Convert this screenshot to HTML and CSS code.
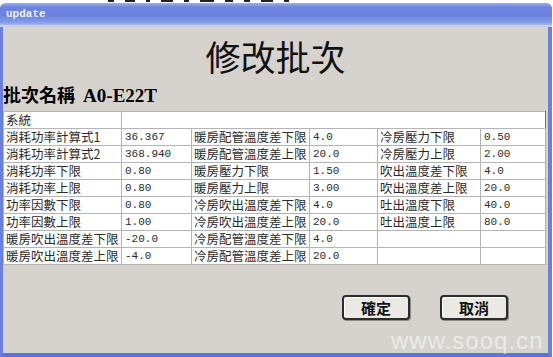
FILE: index.html
```html
<!DOCTYPE html>
<html>

<head>
    <meta charset="UTF-8">
    <title>update</title>
    <link rel="stylesheet" href="styles.css">
</head>

<body>
    <div class="top-strip">
        <i class="ink" style="width: 6px"></i>
        <i class="ink" style="width: 10px"></i>
        <i class="ink" style="width: 4px"></i>
        <i class="ink" style="width: 12px"></i>
        <i class="ink" style="width: 5px"></i>
        <i class="ink" style="width: 14px"></i>
        <i class="ink" style="width: 8px"></i>
        <i class="ink" style="width: 6px"></i>
        <i class="ink" style="width: 12px"></i>
        <i class="ink" style="width: 5px"></i>
    </div>
    <div class="window">
        <div class="titlebar">update</div>
        <div class="content">
            <h1 class="heading">修改批次</h1>
            <div class="batch-name">批次名稱 <span class="code">A0-E22T</span></div>
            <table class="grid">
                <colgroup>
                    <col style="width: 118px">
                    <col style="width: 70px">
                    <col style="width: 118px">
                    <col style="width: 68px">
                    <col style="width: 103px">
                    <col style="width: 65px">
                </colgroup>
                <tr>
                    <td>系統</td>
                    <td colspan="5" class="blank"></td>
                </tr>
                <tr>
                    <td>消耗功率計算式1</td><td class="num">36.367</td>
                    <td>暖房配管溫度差下限</td><td class="num">4.0</td>
                    <td>冷房壓力下限</td><td class="num">0.50</td>
                </tr>
                <tr>
                    <td>消耗功率計算式2</td><td class="num">368.940</td>
                    <td>暖房配管溫度差上限</td><td class="num">20.0</td>
                    <td>冷房壓力上限</td><td class="num">2.00</td>
                </tr>
                <tr>
                    <td>消耗功率下限</td><td class="num">0.80</td>
                    <td>暖房壓力下限</td><td class="num">1.50</td>
                    <td>吹出溫度差下限</td><td class="num">4.0</td>
                </tr>
                <tr>
                    <td>消耗功率上限</td><td class="num">0.80</td>
                    <td>暖房壓力上限</td><td class="num">3.00</td>
                    <td>吹出溫度差上限</td><td class="num">20.0</td>
                </tr>
                <tr>
                    <td>功率因數下限</td><td class="num">0.80</td>
                    <td>冷房吹出溫度差下限</td><td class="num">4.0</td>
                    <td>吐出溫度下限</td><td class="num">40.0</td>
                </tr>
                <tr>
                    <td>功率因數上限</td><td class="num">1.00</td>
                    <td>冷房吹出溫度差上限</td><td class="num">20.0</td>
                    <td>吐出溫度上限</td><td class="num">80.0</td>
                </tr>
                <tr>
                    <td>暖房吹出溫度差下限</td><td class="num">-20.0</td>
                    <td>冷房配管溫度差下限</td><td class="num">4.0</td>
                    <td></td><td></td>
                </tr>
                <tr>
                    <td>暖房吹出溫度差上限</td><td class="num">-4.0</td>
                    <td>冷房配管溫度差上限</td><td class="num">20.0</td>
                    <td></td><td></td>
                </tr>
            </table>
            <div class="actions">
                <button class="btn">確定</button>
                <button class="btn">取消</button>
            </div>
            <div class="watermark">www.sooq.cn</div>
        </div>
    </div>
</body>

</html>
```

FILE: styles.css
```css
html,
body {
    margin: 0;
    padding: 0;
    background-color: #ffffff;
}

body {
    width: 553px;
    height: 357px;
    overflow: hidden;
    font-family: "Noto Sans CJK TC", "Noto Sans CJK SC", sans-serif;
}

/* bottom edge of the page text behind the dialog */
.top-strip {
    display: flex;
    gap: 11px;
    height: 3px;
    padding-left: 108px;
    overflow: hidden;
    background-color: #ffffff;
}

.ink {
    display: block;
    height: 2px;
    background-color: #222;
}

.window {
    width: 545px;
    height: 350px;
    border-left: 3px solid #6b80de;
    border-right: 4px solid #6b80de;
    border-bottom: 4px solid #5f73d6;
    border-radius: 6px 6px 0 0;
    background-color: #d6d3ce;
}

.titlebar {
    height: 22px;
    margin: 0 -4px 0 -3px;
    padding-left: 6px;
    border-radius: 6px 6px 0 0;
    background: linear-gradient(#9fb0f0 0%, #6f84e0 18%, #6c80de 55%, #849cea 88%, #a6b8f0 100%);
    border-bottom: 2px solid #c7cfee;
    font-family: "Liberation Mono", monospace;
    font-weight: bold;
    font-size: 11px;
    line-height: 22px;
    color: #eef1ff;
}

.content {
    position: relative;
    height: 326px;
    background-color: #d6d3ce;
}

.heading {
    margin: 0;
    padding-top: 9px;
    text-align: center;
    font-size: 35px;
    line-height: 40px;
    font-weight: normal;
    color: #111;
}

.batch-name {
    margin-top: 7px;
    height: 22px;
    font-size: 18px;
    line-height: 22px;
    font-weight: bold;
    color: #000;
}

.batch-name .code {
    font-family: "Liberation Serif", serif;
    font-size: 19px;
    margin-left: 4px;
}

.grid {
    margin-top: 6px;
    border-collapse: collapse;
    table-layout: fixed;
    width: 543px;
    background-color: #ffffff;
    border-top: 1px solid #6e6e6e;
    border-left: 1px solid #6e6e6e;
    border-right: 1px solid #6e6e6e;
    border-bottom: 1px solid #9a9a9a;
}

.grid td {
    height: 16px;
    padding: 0 0 0 2px;
    border: 1px solid #b4b4b4;
    font-size: 12.5px;
    line-height: 16px;
    color: #2a2a2a;
    white-space: nowrap;
    overflow: hidden;
}

.grid td.num {
    font-family: "Liberation Mono", monospace;
    font-size: 11px;
    padding-left: 3px;
}

.grid td.blank {
    border-right: 1px solid #6e6e6e;
}

.actions {
    display: flex;
    justify-content: flex-end;
    gap: 30px;
    margin-top: 30px;
    padding-right: 40px;
}

.btn {
    width: 68px;
    height: 25px;
    padding: 0;
    border: 2px solid #2b2b2b;
    border-radius: 4px;
    background-color: #ebe9e4;
    font-family: "Noto Sans CJK TC", sans-serif;
    font-size: 15px;
    font-weight: bold;
    line-height: 18px;
    color: #111;
    box-shadow: inset 1px 1px 0 #ffffff, 1px 1px 0 #8a8a8a;
}

.watermark {
    position: absolute;
    left: 388px;
    top: 300px;
    font-family: "Liberation Sans", sans-serif;
    font-size: 24px;
    letter-spacing: 1px;
    color: rgba(255, 255, 255, 0.55);
}
```
